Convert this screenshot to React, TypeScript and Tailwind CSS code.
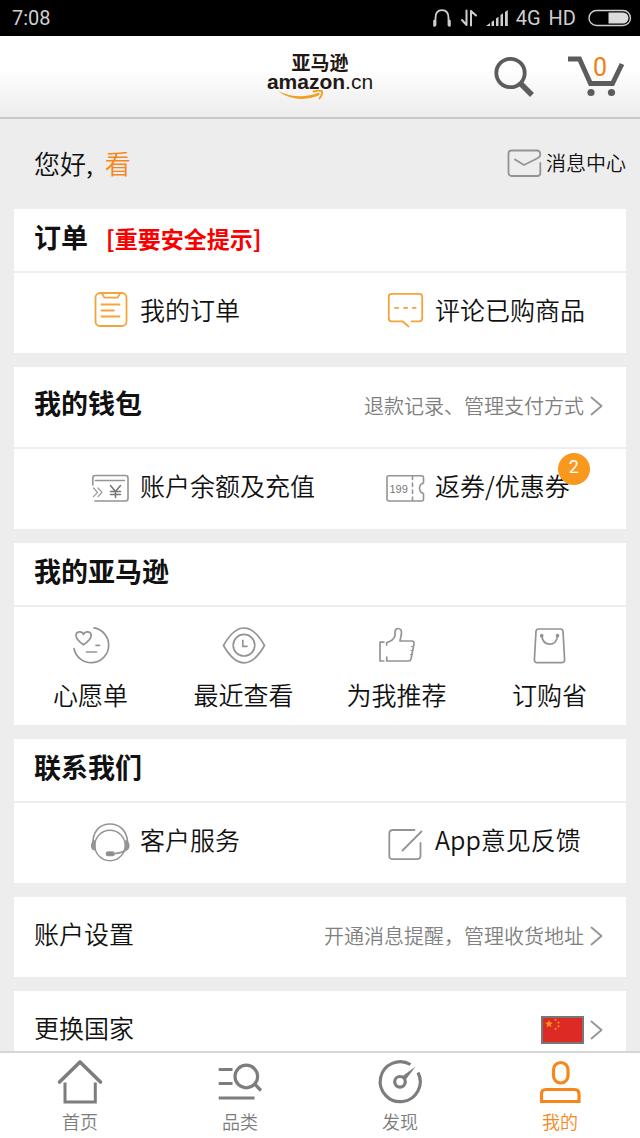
import type { ReactNode } from 'react';

const GREY = '#949494';
const ORANGE = '#f5a33b';

type IconProps = { w?: number; h?: number; color?: string; sw?: number; children: ReactNode };

function Icon({ w = 40, h = 40, color = GREY, sw = 1.8, children }: IconProps) {
  return (
    <svg
      width={w}
      height={h}
      viewBox={`0 0 ${w} ${h}`}
      fill="none"
      stroke={color}
      strokeWidth={sw}
      strokeLinecap="round"
      strokeLinejoin="round"
      aria-hidden="true"
      className="shrink-0 overflow-visible"
    >
      {children}
    </svg>
  );
}

const OrderIcon = () => (
  <Icon color={ORANGE}>
    <rect x="5.5" y="4" width="31" height="33" rx="4.5" />
    <path d="M12 4.5 14.5 8.7H27.5L30 4.5M11.5 15.5H29.5M11.5 21.5H24M11.5 27.5H29.5" />
  </Icon>
);

const ReviewIcon = () => (
  <Icon color={ORANGE}>
    <path d="M23.5 37.5 17.5 32.3H6.5Q3.8 32.3 3.8 29.6V7.6Q3.8 4.9 6.5 4.9H34.5Q37.2 4.9 37.2 7.6V29.6Q37.2 32.3 34.5 32.3H26.5" />
    <path d="M10 18.8H13.3M19 18.8H22.3M27.7 18.8H30.7" />
  </Icon>
);

const BalanceIcon = () => (
  <Icon sw={1.6}>
    <path d="M2.8 20V13Q2.8 10.5 5.3 10.5H35.5Q38 10.5 38 13V33.5Q38 36 35.5 36H5M5.5 15.5H34.5" />
    <path d="M3.5 23 7.5 27.3 3.5 31.6M8 23 12 27.3 8 31.6" strokeWidth="1.2" />
    <path d="M20.5 20.5 25.5 26.5 30.5 20.5M25.5 26.5V32.5M20.5 26.5H30.5M20.5 29.5H30.5" stroke="#777777" />
  </Icon>
);

const CouponIcon = () => (
  <Icon sw={1.6}>
    <path d="M38.5 18V12.5Q38.5 10.8 36.5 10.8H4Q2 10.8 2 12.8V34Q2 36 4 36H36.5Q38.5 36 38.5 34V28.5Q34.5 27.5 34.5 23.3T38.5 18Z" />
    <path d="M27.5 11.5V14.5M27.5 18V21.5M27.5 25V28.5M27.5 32V35.5" />
    <text x="4.5" y="28" fontSize="11" fill="#777777" stroke="none" fontFamily="Liberation Sans, sans-serif" fontWeight="400">
      199
    </text>
  </Icon>
);

const WishIcon = () => (
  <Icon w={44} sw={1.7}>
    <path d="M25 1.9A17.5 17.5 0 1 1 5 22.5" />
    <path d="M14.5 18.8Q7 13.5 7 9.5C7 5 13 4.5 14.5 8.5 16 4.5 22.2 5 22.2 9.5Q22.2 13.5 14.5 18.8Z" />
    <path d="M27 19.3H30.5M17.5 26H27.5" />
  </Icon>
);

const RecentIcon = () => (
  <Icon w={44} sw={1.7}>
    <path d="M1.5 19.5C8 8 14 2 22 2S36 8 42.5 19.5C36 31 30 36.8 22 36.8S8 31 1.5 19.5Z" />
    <circle cx="22" cy="19.2" r="10.8" />
    <path d="M20.8 14.3V20.3H25" />
  </Icon>
);

const ThumbIcon = () => (
  <Icon w={44} sw={1.7}>
    <path d="M8.8 16.2H5V35H8.8M11.7 19V16.5Q18 15 20 10V5.8Q20.3 2.5 23 2.5 26.7 2.5 26.5 7.5L25 15H36.5Q39.5 15 39 18L36 33Q35.5 35 33.5 35H11.7V31" />
    <path d="M36.5 20.5H38M36 24.5H37.5M35.5 28.5H37" strokeWidth="1.1" />
  </Icon>
);

const BagIcon = () => (
  <Icon w={44} sw={1.7}>
    <path d="M10.5 3H32.5Q34.8 3 35 5.3L36.6 33.5Q36.7 36.7 33.6 36.7H9.4Q6.3 36.7 6.4 33.5L8 5.3Q8.2 3 10.5 3Z" />
    <path d="M13.7 10Q15 18.2 21.7 18.2T29.5 10" />
    <circle cx="13.7" cy="9.7" r="1" fill={GREY} />
    <circle cx="29.5" cy="9.7" r="1" fill={GREY} />
  </Icon>
);

const ServiceIcon = () => (
  <Icon sw={1.6}>
    <circle cx="20" cy="26.5" r="15.2" strokeWidth="1.4" />
    <path d="M3 22C3.500 11 11 5 20 5S36.500 11 37.500 22" />
    <path d="M3.200 22H4.800V30.500H3.800Q1.500 29.500 1.800 25.500ZM37.300 22H35.700V30.500H36.700Q39 29.500 38.700 25.500Z" fill={GREY} />
    <rect x="16.500" y="33" width="7.500" height="3.500" rx="1.700" fill="#8c8c8c" />
    <path d="M24 34.700Q32 34 36.800 30.500" />
  </Icon>
);

const FeedbackIcon = () => (
  <Icon>
    <path d="M29.5 11H8Q4.3 11 4.3 14.7V37Q4.3 40.2 8 40.2H32Q35.5 40.2 35.5 37V24M36.5 12.5 17.5 31.5" />
  </Icon>
);

function Chevron() {
  return (
    <Icon w={13} h={20}>
      <path d="M1.5 1.5 11.5 10 1.5 18.5" />
    </Icon>
  );
}

function Star({ x, y, r }: { x: number; y: number; r: number }) {
  const pts = Array.from({ length: 10 }, (_, i) => {
    const a = -Math.PI / 2 + (i * Math.PI) / 5;
    const d = i % 2 ? r * 0.45 : r;
    return `${x + d * Math.cos(a)},${y + d * Math.sin(a)}`;
  }).join(' ');
  return <polygon points={pts} />;
}

function Flag() {
  return (
    <svg width="43" height="28" viewBox="0 0 43 28" role="img" aria-label="中国" className="shrink-0">
      <rect x="1" y="1" width="41" height="26" fill="#de2a24" stroke="#777777" strokeWidth="2" />
      <g fill="#f6a11c">
        <Star x={8} y={8} r={4} />
        <Star x={14.5} y={3.8} r={1.5} />
        <Star x={17.5} y={6.5} r={1.5} />
        <Star x={17.5} y={10.3} r={1.5} />
        <Star x={14.5} y={13} r={1.5} />
      </g>
    </svg>
  );
}

function StatusBar() {
  return (
    <div className="flex h-9 shrink-0 items-center justify-between bg-black pr-2 pl-3 font-['Roboto',sans-serif] text-[20px] leading-9 font-normal text-[#cfcfcf]">
      <span>7:08</span>
      <div className="flex items-center gap-2">
        <Icon w={20} h={20} color="#cfcfcf" sw={1.8}>
          <path d="M3.5 17V10Q3.5 2.2 10 2.2T16.5 10V17" />
          <path d="M2.5 13V17.5M17.5 13V17.5" strokeWidth="2.6" />
        </Icon>
        <Icon w={18} h={20} color="#cfcfcf" sw={2}>
          <path d="M6.5 2.5V17M6.5 17 2 12M11 17.5V3M11 3 16 7.5" />
        </Icon>
        <svg width="22" height="20" viewBox="0 0 22 20" fill="#cfcfcf" aria-hidden="true">
          <path d="M0 18 4 15V18ZM5.5 14 8 12.2V18H5.5ZM10 10.5 12.5 8.7V18H10ZM14.5 7 17 5.2V18H14.5ZM19 4 21.800 2V18H19Z" />
        </svg>
        <span>4G</span>
        <span>HD</span>
        <svg width="44" height="18" viewBox="0 0 44 18" aria-hidden="true" className="ml-1">
          <rect x="1" y="1.5" width="41.5" height="15" rx="7.5" fill="none" stroke="#cfcfcf" strokeWidth="1.4" />
          <path d="M20.5 3.5H35A5.5 5.5 0 0 1 35 14.5H20.5Z" fill="#dcdcdc" />
        </svg>
      </div>
    </div>
  );
}

function Header() {
  return (
    <header className="grid h-[83px] shrink-0 grid-cols-[1fr_auto_1fr] items-center border-b-2 border-[#c9c9c9] bg-linear-to-b from-white from-40% to-[#ececec] px-4">
      <a href="#home" className="col-start-2 flex flex-col items-center text-[#231815]">
        <span className="text-[19px] leading-5 font-bold">亚马逊</span>
        <span className="flex font-['Liberation_Sans',sans-serif] text-[21px] leading-5">
          <span className="font-bold">amazon</span>
          <span className="font-['Liberation_Sans_Narrow','Liberation_Sans',sans-serif] font-normal">.cn</span>
        </span>
        <svg width="106" height="9" viewBox="0 0 106 9" aria-hidden="true" className="overflow-visible">
          <path d="M10.500 -1Q17 1.500 22 3 37 6.500 52 .5 54 2 50.500 4 30 12 10.500 -1Z" fill="#f0a020" />
          <path d="M46.500 -.5Q52 -2 55 -.8 55.500 3 52.500 6.500" fill="none" stroke="#f0a020" strokeWidth="1.900" strokeLinecap="round" />
        </svg>
      </a>
      <div className="flex items-center justify-end gap-8">
        <button type="button" aria-label="搜索">
          <Icon w={42} h={42} color="#5c5c5c" sw={3.8}>
            <circle cx="16.500" cy="17" r="14.200" />
            <path d="M26.500 27.500 38 39" strokeWidth="5.500" strokeLinecap="butt" />
          </Icon>
        </button>
        <button type="button" aria-label="购物车" className="relative">
          <Icon w={56} h={42} color="#5c5c5c" sw={4.8}>
            <path d="M0 3H11.500L22.500 27.500H44.500L54 8" strokeLinecap="butt" strokeLinejoin="miter" />
            <circle cx="23" cy="36.500" r="3.600" fill="#5c5c5c" stroke="none" />
            <circle cx="43.500" cy="36.500" r="3.600" fill="#5c5c5c" stroke="none" />
          </Icon>
          <span className="absolute top-0 left-[25px] font-['Roboto',sans-serif] text-[25px] leading-6 font-normal text-[#f08010]">0</span>
        </button>
      </div>
    </header>
  );
}

function Card({ children }: { children: ReactNode }) {
  return <section className="divide-y-2 divide-[#ededed] bg-white">{children}</section>;
}

function Title({ children }: { children: ReactNode }) {
  return <h2 className="text-[27px] leading-8 font-bold">{children}</h2>;
}

function CardHead({ title, children }: { title: string; children?: ReactNode }) {
  return (
    <div className="flex h-16 items-center gap-[18px] px-5 pb-1.5">
      <Title>{title}</Title>
      {children}
    </div>
  );
}

function PairRow({ children }: { children: ReactNode }) {
  return <div className="grid h-20 grid-cols-[minmax(0,295fr)_minmax(0,317fr)] pb-2">{children}</div>;
}

function PairItem({ icon, label, badge }: { icon: ReactNode; label: string; badge?: string }) {
  return (
    <a href="#item" className="flex items-center gap-2.5 pl-[76px]">
      {icon}
      <span className="relative text-[25px] leading-8 whitespace-nowrap">
        {label}
        {badge && (
          <span className="absolute -top-4 -right-5 size-8 rounded-full bg-[#f8991d] text-center font-['Roboto',sans-serif] text-[18px] leading-7 font-normal text-white">
            {badge}
          </span>
        )}
      </span>
    </a>
  );
}

function LinkRow({ title, tall, children }: { title: ReactNode; tall?: boolean; children: ReactNode }) {
  return (
    <a
      href="#more"
      className={`flex items-center justify-between pr-[23px] pb-2 pl-5 ${tall ? 'h-[82px]' : 'h-20'}`}
    >
      {title}
      <span className="flex items-center gap-1.5 pt-1.5 text-[20px] leading-8 text-[#808080]">
        {children}
        <Chevron />
      </span>
    </a>
  );
}

const shortcuts = [
  { label: '心愿单', icon: <WishIcon /> },
  { label: '最近查看', icon: <RecentIcon /> },
  { label: '为我推荐', icon: <ThumbIcon /> },
  { label: '订购省', icon: <BagIcon /> },
];

const TAB = '#7d7d7d';
const tabs = [
  {
    label: '首页',
    icon: (
      <Icon w={46} h={46} color={TAB} sw={3}>
        <path d="M2.5 23 23 3 43.5 23" strokeWidth="3.6" />
        <path d="M8 23.5V43H38.3V23.5" strokeLinecap="butt" strokeLinejoin="miter" />
      </Icon>
    ),
  },
  {
    label: '品类',
    icon: (
      <Icon w={46} h={46} color={TAB} sw={3.2}>
        <path d="M1.7 10.5H15.5M1.7 24.5H15.5M1.7 39H37.5M38 25.5 44 31.5" strokeLinecap="butt" />
        <circle cx="29.3" cy="17.5" r="11.3" />
      </Icon>
    ),
  },
  {
    label: '发现',
    icon: (
      <Icon w={46} h={46} color={TAB} sw={3.2}>
        <path d="M41 13.5A20 20 0 1 1 33.5 5.5" strokeLinecap="butt" />
        <circle cx="23" cy="22.8" r="5.3" />
        <path d="M25 17.5 38.5 7.5 28.5 21Z" fill={TAB} stroke="none" />
      </Icon>
    ),
  },
  {
    label: '我的',
    active: true,
    icon: (
      <Icon w={46} h={46} color="#f7861b" sw={3.2}>
        <rect x="16.5" y="3.5" width="14.5" height="20.5" rx="7.2" />
        <path d="M4.5 42.5V35Q4.5 30.5 9 30.5H37.5Q42 30.5 42 35V42.5Z" strokeLinejoin="miter" />
      </Icon>
    ),
  },
];

export default function App() {
  return (
    <div className="flex h-dvh flex-col bg-[#ededed] font-['Noto_Sans_CJK_SC',sans-serif] font-[350] text-[#111111]">
      <StatusBar />
      <Header />
      <main className="min-h-0 flex-1 overflow-y-auto px-3.5 [scrollbar-width:none]">
        <div className="flex h-[90px] items-center justify-between pb-0.5 pl-5">
          <p className="text-[26px] leading-8">
            您好, <span className="ml-1.5 text-[#f7861b]">看</span>
          </p>
          <a href="#messages" className="flex items-center gap-1 text-[20px] leading-8">
            <Icon w={35} h={28} sw={1.8}>
              <path d="M8 10.5 17 16 30 9.5Q33.3 8 33.3 5.5 33.3 1.5 30 1.5H4.5Q1.5 1.5 1.5 4.5V24Q1.5 27 4.5 27H30.3Q33.3 27 33.3 24V14" />
            </Icon>
            消息中心
          </a>
        </div>

        <div className="flex flex-col gap-3.5">
          <Card>
            <CardHead title="订单">
              <a href="#safety" className="pt-0.5 text-[23px] leading-8 font-bold text-[#f80000]">
                [重要安全提示]
              </a>
            </CardHead>
            <PairRow>
              <PairItem icon={<OrderIcon />} label="我的订单" />
              <PairItem icon={<ReviewIcon />} label="评论已购商品" />
            </PairRow>
          </Card>

          <Card>
            <LinkRow tall title={<Title>我的钱包</Title>}>
              退款记录、管理支付方式
            </LinkRow>
            <PairRow>
              <PairItem icon={<BalanceIcon />} label="账户余额及充值" />
              <PairItem icon={<CouponIcon />} label="返券/优惠券" badge="2" />
            </PairRow>
          </Card>

          <Card>
            <CardHead title="我的亚马逊" />
            <div className="grid h-[118px] grid-cols-4">
              {shortcuts.map((s) => (
                <a key={s.label} href="#shortcut" className="flex flex-col items-center gap-3 pt-[19px]">
                  {s.icon}
                  <span className="text-[25px] leading-8 whitespace-nowrap">{s.label}</span>
                </a>
              ))}
            </div>
          </Card>

          <Card>
            <CardHead title="联系我们" />
            <PairRow>
              <PairItem icon={<ServiceIcon />} label="客户服务" />
              <PairItem icon={<FeedbackIcon />} label="App意见反馈" />
            </PairRow>
          </Card>

          <Card>
            <LinkRow title={<h2 className="text-[25px] leading-8">账户设置</h2>}>开通消息提醒，管理收货地址</LinkRow>
          </Card>

          <Card>
            <LinkRow title={<h2 className="text-[25px] leading-8">更换国家</h2>}>
              <Flag />
            </LinkRow>
          </Card>
        </div>
      </main>

      <nav className="grid h-[87px] shrink-0 grid-cols-4 border-t-2 border-[#d6d6d6] bg-white">
        {tabs.map((t) => (
          <a
            key={t.label}
            href="#tab"
            aria-current={t.active ? 'page' : undefined}
            className={`flex flex-col items-center gap-1 pt-1.5 text-[18px] leading-6 ${t.active ? 'text-[#f7861b]' : 'text-[#7d7d7d]'}`}
          >
            {t.icon}
            {t.label}
          </a>
        ))}
      </nav>
    </div>
  );
}
